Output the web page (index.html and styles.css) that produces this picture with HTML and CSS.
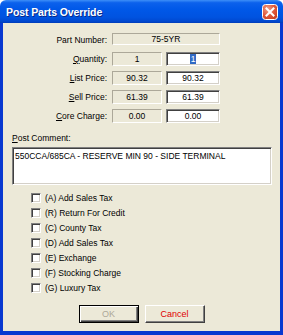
FILE: index.html
```html
<!DOCTYPE html>
<html>
<head>
<meta charset="utf-8">
<link rel="stylesheet" href="styles.css">
</head>
<body>
<div class="window">
  <div class="titlebar">
    <span class="title">Post Parts Override</span>
    <span class="close">
      <svg width="16" height="16" viewBox="0 0 16 16">
        <defs>
          <radialGradient id="rg" cx="0.35" cy="0.3" r="0.9">
            <stop offset="0" stop-color="#f0a08a"/>
            <stop offset="0.5" stop-color="#e0583a"/>
            <stop offset="1" stop-color="#c03818"/>
          </radialGradient>
        </defs>
        <rect x="0.5" y="0.5" width="15" height="15" rx="3" fill="url(#rg)" stroke="#ffffff"/>
        <path d="M4.5 4.5 L11.5 11.5 M11.5 4.5 L4.5 11.5" stroke="#ffffff" stroke-width="2" stroke-linecap="square"/>
      </svg>
    </span>
  </div>
  <div class="client">
    <div class="grid">
      <div class="lbl">Part Number:</div>
      <div class="ro wide">75-5YR</div>
      <div class="lbl"><u>Q</u>uantity:</div>
      <div class="ro">1</div>
      <div class="ed"><span class="sel">1</span></div>
      <div class="lbl"><u>L</u>ist Price:</div>
      <div class="ro">90.32</div>
      <div class="ed">90.32</div>
      <div class="lbl"><u>S</u>ell Price:</div>
      <div class="ro">61.39</div>
      <div class="ed">61.39</div>
      <div class="lbl"><u>C</u>ore Charge:</div>
      <div class="ro">0.00</div>
      <div class="ed">0.00</div>
    </div>
    <div class="comment-label"><u>P</u>ost Comment:</div>
    <div class="comment">550CCA/685CA - RESERVE MIN 90 - SIDE TERMINAL</div>
    <div class="checks">
      <div class="check"><span class="box"></span><span>(A) Add Sales Tax</span></div>
      <div class="check"><span class="box"></span><span>(R) Return For Credit</span></div>
      <div class="check"><span class="box"></span><span>(C) County Tax</span></div>
      <div class="check"><span class="box"></span><span>(D) Add Sales Tax</span></div>
      <div class="check"><span class="box"></span><span>(E) Exchange</span></div>
      <div class="check"><span class="box"></span><span>(F) Stocking Charge</span></div>
      <div class="check"><span class="box"></span><span>(G) Luxury Tax</span></div>
    </div>
    <div class="buttons">
      <div class="btn btn-default btn-disabled">OK</div>
      <div class="btn btn-cancel">Cancel</div>
    </div>
  </div>
</div>
</body>
</html>
```

FILE: styles.css
```css
html, body {
  margin: 0;
  padding: 0;
  background: #ffffff;
}

.window {
  width: 283px;
  height: 335px;
  display: flex;
  flex-direction: column;
  font-family: "Liberation Sans", Arial, sans-serif;
  font-size: 8.5px;
  color: #000;
}

.titlebar {
  height: 23px;
  flex: none;
  display: flex;
  align-items: center;
  justify-content: space-between;
  padding: 0 5px 0 6px;
  border-radius: 6px 6px 0 0;
  background: linear-gradient(#3d8ff8 0%, #0c61ec 12%, #0058e8 40%, #0053e0 75%, #0048d0 92%, #003cb8 100%);
}

.title {
  color: #ffffff;
  font-weight: bold;
  font-size: 10.5px;
  text-shadow: 1px 1px 0 #0a2a8a;
  letter-spacing: -0.1px;
}

.close {
  display: flex;
  width: 16px;
  height: 16px;
}

.client {
  flex: 1;
  background: #ece9d8;
  border-left: 3px solid #0838d0;
  border-right: 3px solid #0838d0;
  border-bottom: 4px solid #0838d0;
  display: flex;
  flex-direction: column;
}

.grid {
  display: grid;
  grid-template-columns: 105px 50px 54px;
  grid-auto-rows: 14px;
  column-gap: 4px;
  row-gap: 5px;
  padding-top: 10px;
}

.lbl {
  text-align: right;
  padding-right: 5px;
  line-height: 14px;
  margin-right: -4px;
  white-space: nowrap;
}

.ro {
  box-sizing: border-box;
  border: 1px solid;
  border-color: #aca899 #ffffff #ffffff #aca899;
  text-align: center;
  line-height: 12px;
  background: #ece9d8;
}

.wide {
  grid-column: 2 / 4;
  height: 12px;
  line-height: 10px;
}

.ed {
  box-sizing: border-box;
  background: #ffffff;
  border: 1px solid;
  border-color: #808080 #ffffff #ffffff #808080;
  box-shadow: inset 1px 1px 0 #404040, inset -1px -1px 0 #d4d0c8;
  text-align: center;
  line-height: 12px;
}

.sel {
  background: #316ac5;
  color: #ffffff;
  padding: 0 1px;
}

.comment-label {
  margin-top: 10px;
  margin-left: 9px;
  line-height: 10px;
}

.comment {
  box-sizing: border-box;
  margin-top: 4px;
  margin-left: 9px;
  width: 260px;
  height: 38px;
  background: #ffffff;
  border: 1px solid;
  border-color: #808080 #ffffff #ffffff #808080;
  box-shadow: inset 1px 1px 0 #404040, inset -1px -1px 0 #d4d0c8;
  padding: 3px 2px;
  line-height: 10px;
}

.checks {
  margin-top: 5px;
  padding-left: 28px;
  display: flex;
  flex-direction: column;
}

.check {
  height: 15px;
  display: flex;
  align-items: center;
  gap: 4px;
}

.box {
  box-sizing: border-box;
  width: 10px;
  height: 10px;
  background: #ffffff;
  border: 1px solid;
  border-color: #808080 #ffffff #ffffff #808080;
  box-shadow: inset 1px 1px 0 #404040, inset -1px -1px 0 #d4d0c8;
}

.buttons {
  margin-top: 10px;
  display: flex;
  justify-content: center;
  gap: 6px;
}

.btn {
  box-sizing: border-box;
  width: 60px;
  height: 18px;
  display: flex;
  align-items: center;
  justify-content: center;
  background: #ece9d8;
  border: 1px solid;
  border-color: #ffffff #404040 #404040 #ffffff;
  box-shadow: inset -1px -1px 0 #808080;
  font-size: 9px;
}

.btn-default {
  border-color: #000000;
  box-shadow: inset 1px 1px 0 #ffffff, inset -1px -1px 0 #404040, inset -2px -2px 0 #808080;
}

.btn-disabled {
  color: #aca899;
}

.btn-cancel {
  color: #e00000;
}
```
